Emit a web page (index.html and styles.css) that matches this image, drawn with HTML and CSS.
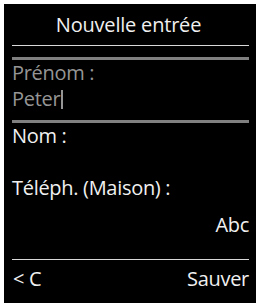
FILE: index.html
```html
<!DOCTYPE html>
<html lang="fr">
<head>
<meta charset="utf-8">
<link rel="stylesheet" href="styles.css">
</head>
<body>
<div class="screen">
  <div class="title">Nouvelle entrée</div>
  <div class="bar"></div>
  <div class="row dim">Prénom :</div>
  <div class="row dim">Peter<span class="cursor"></span></div>
  <div class="bar bar2"></div>
  <div class="row">Nom :</div>
  <div class="row"></div>
  <div class="row">Téléph. (Maison) :</div>
  <div class="row right abc">Abc</div>
  <div class="softkeys">
    <span class="back">&lt; C</span>
    <span>Sauver</span>
  </div>
</div>
</body>
</html>
```
FILE: styles.css
```css
html, body {
  margin: 0;
  padding: 0;
  background: #fff;
}
.screen {
  margin: 4px 0 0 4px;
  width: 252px;
  height: 299px;
  background: #000;
  padding: 0 7px 0 8px;
  box-sizing: border-box;
  font-family: "Open Sans", "DejaVu Sans", sans-serif;
  color: #f0f0f0;
  display: flex;
  flex-direction: column;
}
.title {
  height: 42px;
  line-height: 42px;
  font-size: 20px;
  letter-spacing: -0.2px;
  text-align: center;
  border-bottom: 1px solid #d8d8d8;
  box-sizing: border-box;
  flex: none;
  padding-right: 4px;
}
.bar {
  height: 3px;
  background: #808080;
  margin-top: 11px;
  flex: none;
}
.bar2 {
  margin-top: 8px;
}
.row {
  height: 26px;
  line-height: 26px;
  font-size: 20px;
  letter-spacing: -0.3px;
  flex: none;
}
.dim {
  color: #959595;
}
.right {
  text-align: right;
}
.abc {
  margin-top: 11px;
}
.cursor {
  display: inline-block;
  width: 2px;
  height: 19px;
  background: #959595;
  vertical-align: -3px;
  margin-left: 1px;
}
.softkeys {
  margin-top: auto;
  border-top: 1px solid #d8d8d8;
  height: 44px;
  display: flex;
  justify-content: space-between;
  font-size: 20px;
  line-height: 26px;
  letter-spacing: -0.3px;
  padding: 6px 0 0 1px;
  box-sizing: border-box;
  flex: none;
}
```
